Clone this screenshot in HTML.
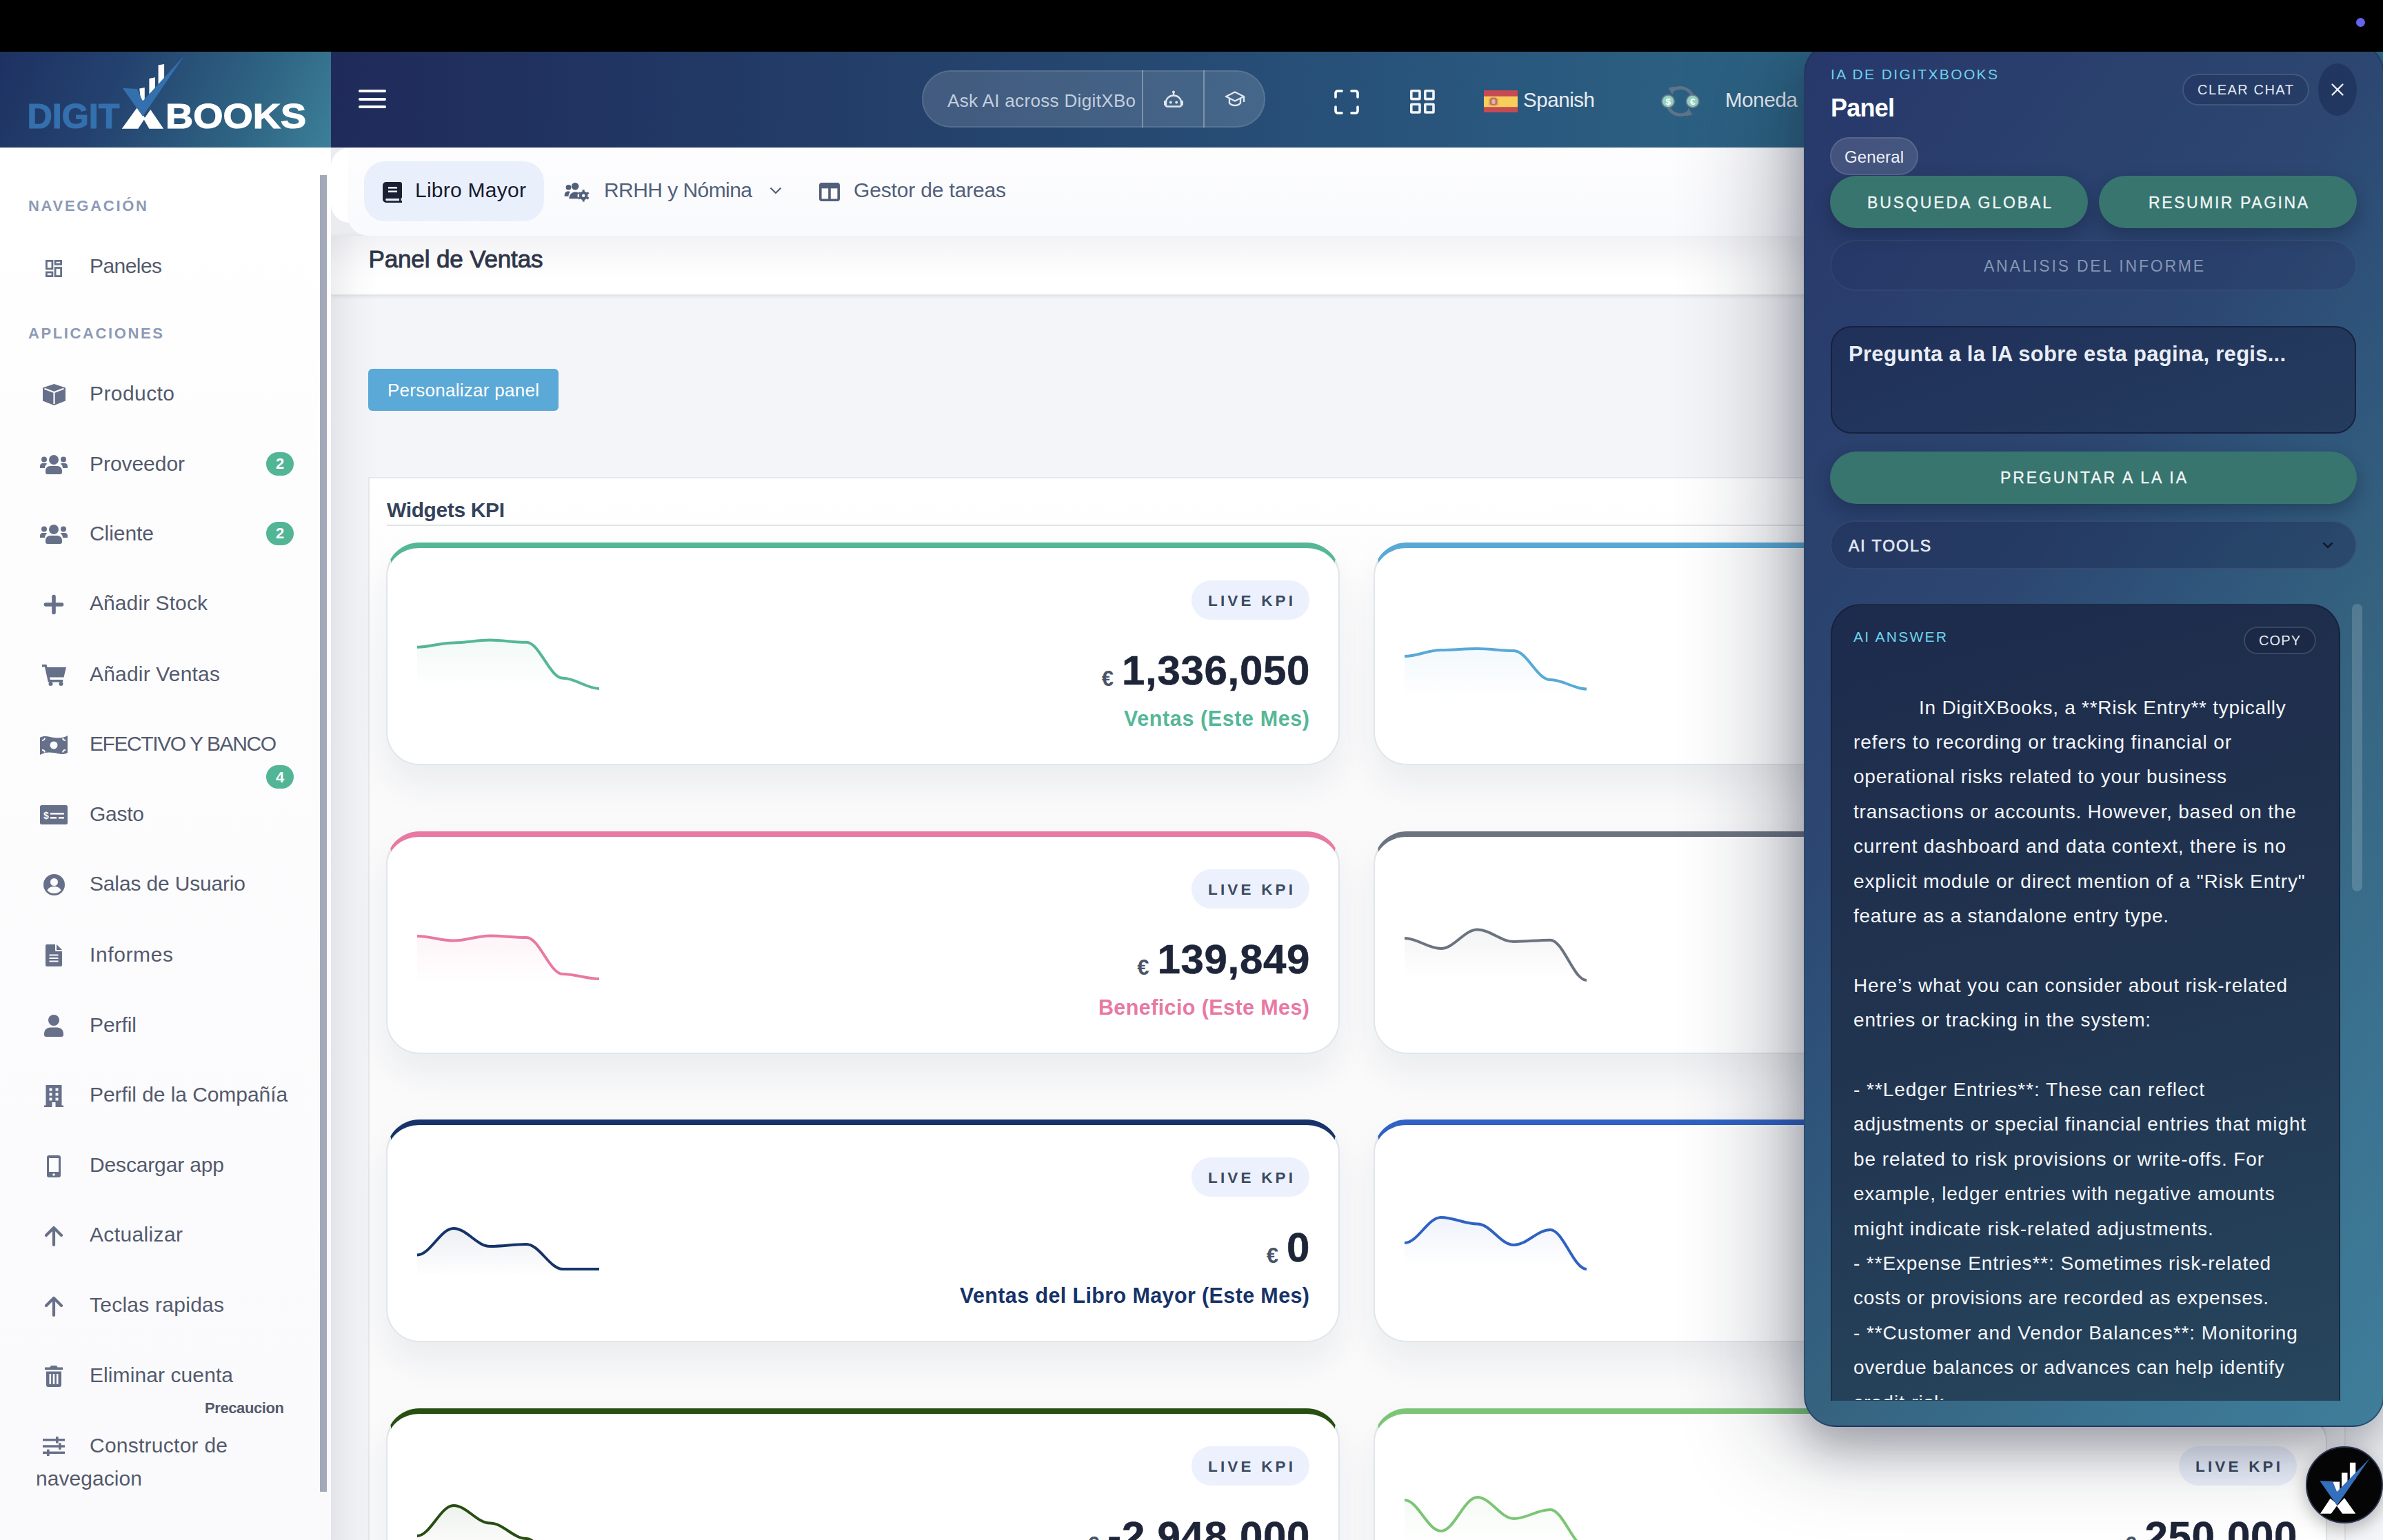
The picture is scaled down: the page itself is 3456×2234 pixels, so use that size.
<!DOCTYPE html><html lang="es"><head><meta charset="utf-8"><title>Panel de Ventas</title><style>
*{box-sizing:border-box;margin:0;padding:0}
html,body{width:3456px;height:2234px;overflow:hidden;background:#f4f5f8}
body{position:relative;font-family:"Liberation Sans",sans-serif;color:#333}
.abs{position:absolute}
svg{display:block;overflow:visible}
</style></head><body>
<div class="abs" style="left:480px;top:214px;width:2976px;height:128px;background:#ebecf0"></div>
<div class="abs" style="left:480px;top:342px;width:2976px;height:84.500px;background:linear-gradient(#f2f2f5,#fbfbfc 45%,#ffffff 75%);box-shadow:0 1px 0 #e9eaee,0 2px 6px rgba(30,40,70,.13)"></div>
<div class="abs" style="left:480px;top:214px;width:400px;height:109px;background:#ffffff;border-radius:27px 0 0 27px"></div>
<div class="abs" style="left:504px;top:214px;width:2952px;height:128px;background:linear-gradient(#fdfdfe,#f9fafd);border-bottom-left-radius:30px"></div>
<div class="abs" style="left:480px;top:342px;width:70px;height:1892px;background:linear-gradient(90deg,rgba(20,25,50,.075),rgba(20,25,50,.02) 55%,rgba(0,0,0,0))"></div>
<div class="abs" style="left:528px;top:234px;width:261px;height:87px;border-radius:30px;background:#eaeffc"></div>
<svg class="abs" style="left:555px;top:263.500px" width="28" height="30" viewBox="0 0 28 30"><path d="M5 0h20a3 3 0 0 1 3 3v19a2 2 0 0 1-1.5 1.9v3.1H28v3H5a5 5 0 0 1-5-5V5a5 5 0 0 1 5-5zm0 24a2 2 0 0 0 0 3.2h19V24z" fill="#1b2033"/><rect x="8" y="7" width="13" height="2.6" fill="#eaeffc"/><rect x="8" y="12.5" width="13" height="2.6" fill="#eaeffc"/></svg>
<div style="position:absolute;top:256.0px;line-height:39px;font-size:30px;color:#161b2e;font-weight:400;white-space:pre;left:602.0px;letter-spacing:0.26px;">Libro Mayor</div>
<svg class="abs" style="left:818px;top:265px" width="38" height="27" viewBox="0 0 38 28" fill="#525f7a"><circle cx="6" cy="7" r="4"/><circle cx="16" cy="5.5" r="5.5"/><path d="M0 19c0-4 2.5-6 6-6 1 0 2 .3 2.700 .7C7 15.500 6 18 6 20.500H0zM7 24c0-6 4-10 9-10 2 0 3.500.5 4.800 1.500-1.500 2-1.800 5.500.2 8.500z"/><circle cx="28.500" cy="19.500" r="6.500"/><circle cx="28.500" cy="19.500" r="2.300" fill="#fbfbfd"/><g stroke="#525f7a" stroke-width="3.200" stroke-linecap="butt"><path d="M28.500 10.500v18M20.700 15l15.600 9M20.700 24l15.600-9"/></g><circle cx="28.500" cy="19.500" r="2.300" fill="#fbfbfd"/></svg>
<div style="position:absolute;top:256.0px;line-height:39px;font-size:30px;color:#525f7a;font-weight:400;white-space:pre;left:876.0px;letter-spacing:-0.56px;">RRHH y Nómina</div>
<svg class="abs" style="left:1116px;top:271px" width="18" height="11" viewBox="0 0 18 11"><path d="M1.500 1.500l7.500 7.500 7.500-7.500" fill="none" stroke="#525f7a" stroke-width="2.200"/></svg>
<svg class="abs" style="left:1188px;top:265px" width="30" height="27" viewBox="0 0 30 27"><rect x="1.800" y="1.800" width="26.400" height="23.400" rx="2" fill="none" stroke="#525f7a" stroke-width="3.600"/><rect x="1.800" y="1.800" width="26.400" height="6.500" fill="#525f7a"/><rect x="13.200" y="5" width="3.600" height="20" fill="#525f7a"/></svg>
<div style="position:absolute;top:256.0px;line-height:39px;font-size:30px;color:#525f7a;font-weight:400;white-space:pre;left:1238.0px;letter-spacing:-0.16px;">Gestor de tareas</div>
<div style="position:absolute;top:352.5px;line-height:46px;font-size:35px;color:#2f3648;font-weight:400;white-space:pre;left:534.5px;letter-spacing:-0.14px;-webkit-text-stroke:0.900px #2f3648;">Panel de Ventas</div>
<div class="abs" style="left:534px;top:535px;width:276px;height:61px;border-radius:6px;background:#5ba9d7"></div>
<div style="position:absolute;top:549.0px;line-height:34px;font-size:26px;color:#ffffff;font-weight:400;white-space:pre;left:562.0px;letter-spacing:0.27px;">Personalizar panel</div>
<div class="abs" style="left:534px;top:692px;width:2868px;height:1700px;background:linear-gradient(#ffffff,#fafafb 300px);border:2px solid #e4e7eb"></div>
<div style="position:absolute;top:719.5px;line-height:39px;font-size:30px;color:#34435a;font-weight:700;white-space:pre;left:561.0px;letter-spacing:-0.37px;">Widgets KPI</div>
<div class="abs" style="left:561px;top:761px;width:2815px;height:2px;background:#dfe4e8"></div>
<div class="abs" style="left:560px;top:787px;width:1383px;height:323px;border-radius:48px;background:#fff;border:2px solid #e1e6ea;border-top:8px solid #55b797;box-shadow:0 28px 50px rgba(30,40,60,.065)"></div>
<svg class="abs" style="left:0;top:0" width="3456" height="2234" viewBox="0 0 3456 2234"><defs><linearGradient id="g0" x1="0" y1="929" x2="0" y2="999" gradientUnits="userSpaceOnUse"><stop offset="0" stop-color="#55b797" stop-opacity=".08"/><stop offset="1" stop-color="#55b797" stop-opacity="0"/></linearGradient></defs><path d="M605.0 938.7C624.0 938.7 638.8 932.4 657.8 932.4C676.8 932.4 691.6 928.6 710.6 928.6C729.6 928.6 744.4 931.7 763.4 931.7C782.4 931.7 797.2 983.7 816.2 983.7C835.2 983.7 850.0 998.9 869.0 998.9L869.0 1058.9L605.0 1058.9Z" fill="url(#g0)"/><path d="M605.0 938.7C624.0 938.7 638.8 932.4 657.8 932.4C676.8 932.4 691.6 928.6 710.6 928.6C729.6 928.6 744.4 931.7 763.4 931.7C782.4 931.7 797.2 983.7 816.2 983.7C835.2 983.7 850.0 998.9 869.0 998.9" fill="none" stroke="#55b797" stroke-width="4" stroke-linecap="butt" stroke-linejoin="round"/></svg>
<div class="abs" style="left:1728px;top:842px;width:171px;height:57px;border-radius:29px;background:#ecf1fd"></div>
<div style="position:absolute;top:856.5px;line-height:29px;font-size:22.5px;color:#3b4a60;font-weight:700;white-space:pre;left:1752.0px;letter-spacing:4.18px;">LIVE KPI</div>
<div style="position:absolute;top:938.0px;line-height:70px;font-size:60px;color:#1e2538;font-weight:700;white-space:pre;right:1556.5px;margin-right:-0.70px;letter-spacing:0.70px;-webkit-text-stroke:0.600px #1e2538;">1,336,050</div>
<div style="position:absolute;top:969.5px;line-height:30px;font-size:31px;color:#4a5568;font-weight:700;white-space:pre;right:1841.0px;">€</div>
<div style="position:absolute;top:1022.0px;line-height:40px;font-size:30.5px;color:#55b797;font-weight:700;white-space:pre;right:1557.0px;margin-right:-0.60px;letter-spacing:0.60px;">Ventas (Este Mes)</div>
<div class="abs" style="left:1992px;top:787px;width:1383px;height:323px;border-radius:48px;background:#fff;border:2px solid #e1e6ea;border-top:8px solid #58a9d6;box-shadow:0 28px 50px rgba(30,40,60,.065)"></div>
<svg class="abs" style="left:0;top:0" width="3456" height="2234" viewBox="0 0 3456 2234"><defs><linearGradient id="g1" x1="0" y1="941" x2="0" y2="1011" gradientUnits="userSpaceOnUse"><stop offset="0" stop-color="#58a9d6" stop-opacity=".08"/><stop offset="1" stop-color="#58a9d6" stop-opacity="0"/></linearGradient></defs><path d="M2037.0 952.0C2056.0 952.0 2070.8 943.0 2089.8 943.0C2108.8 943.0 2123.6 941.0 2142.6 941.0C2161.6 941.0 2176.4 944.0 2195.4 944.0C2214.4 944.0 2229.2 986.0 2248.2 986.0C2267.2 986.0 2282.0 999.5 2301.0 999.5L2301.0 1059.5L2037.0 1059.5Z" fill="url(#g1)"/><path d="M2037.0 952.0C2056.0 952.0 2070.8 943.0 2089.8 943.0C2108.8 943.0 2123.6 941.0 2142.6 941.0C2161.6 941.0 2176.4 944.0 2195.4 944.0C2214.4 944.0 2229.2 986.0 2248.2 986.0C2267.2 986.0 2282.0 999.5 2301.0 999.5" fill="none" stroke="#58a9d6" stroke-width="4" stroke-linecap="butt" stroke-linejoin="round"/></svg>
<div class="abs" style="left:3160px;top:842px;width:171px;height:57px;border-radius:29px;background:#ecf1fd"></div>
<div style="position:absolute;top:856.5px;line-height:29px;font-size:22.5px;color:#3b4a60;font-weight:700;white-space:pre;left:3184.0px;letter-spacing:4.18px;">LIVE KPI</div>
<div class="abs" style="left:560px;top:1206px;width:1383px;height:323px;border-radius:48px;background:#fff;border:2px solid #e1e6ea;border-top:8px solid #e879a3;box-shadow:0 28px 50px rgba(30,40,60,.065)"></div>
<svg class="abs" style="left:0;top:0" width="3456" height="2234" viewBox="0 0 3456 2234"><defs><linearGradient id="g2" x1="0" y1="1358" x2="0" y2="1428" gradientUnits="userSpaceOnUse"><stop offset="0" stop-color="#e879a3" stop-opacity=".08"/><stop offset="1" stop-color="#e879a3" stop-opacity="0"/></linearGradient></defs><path d="M605.0 1358.0C624.0 1358.0 638.8 1364.6 657.8 1364.6C676.8 1364.6 691.6 1357.5 710.6 1357.5C729.6 1357.5 744.4 1360.0 763.4 1360.0C782.4 1360.0 797.2 1413.0 816.2 1413.0C835.2 1413.0 850.0 1420.0 869.0 1420.0L869.0 1480.0L605.0 1480.0Z" fill="url(#g2)"/><path d="M605.0 1358.0C624.0 1358.0 638.8 1364.6 657.8 1364.6C676.8 1364.6 691.6 1357.5 710.6 1357.5C729.6 1357.5 744.4 1360.0 763.4 1360.0C782.4 1360.0 797.2 1413.0 816.2 1413.0C835.2 1413.0 850.0 1420.0 869.0 1420.0" fill="none" stroke="#e879a3" stroke-width="4" stroke-linecap="butt" stroke-linejoin="round"/></svg>
<div class="abs" style="left:1728px;top:1261px;width:171px;height:57px;border-radius:29px;background:#ecf1fd"></div>
<div style="position:absolute;top:1275.5px;line-height:29px;font-size:22.5px;color:#3b4a60;font-weight:700;white-space:pre;left:1752.0px;letter-spacing:4.18px;">LIVE KPI</div>
<div style="position:absolute;top:1357.0px;line-height:70px;font-size:60px;color:#1e2538;font-weight:700;white-space:pre;right:1556.5px;margin-right:-0.70px;letter-spacing:0.70px;-webkit-text-stroke:0.600px #1e2538;">139,849</div>
<div style="position:absolute;top:1388.5px;line-height:30px;font-size:31px;color:#4a5568;font-weight:700;white-space:pre;right:1789.6px;">€</div>
<div style="position:absolute;top:1441.0px;line-height:40px;font-size:30.5px;color:#e879a3;font-weight:700;white-space:pre;right:1557.0px;margin-right:-0.41px;letter-spacing:0.41px;">Beneficio (Este Mes)</div>
<div class="abs" style="left:1992px;top:1206px;width:1383px;height:323px;border-radius:48px;background:#fff;border:2px solid #e1e6ea;border-top:8px solid #6c7380;box-shadow:0 28px 50px rgba(30,40,60,.065)"></div>
<svg class="abs" style="left:0;top:0" width="3456" height="2234" viewBox="0 0 3456 2234"><defs><linearGradient id="g3" x1="0" y1="1349" x2="0" y2="1419" gradientUnits="userSpaceOnUse"><stop offset="0" stop-color="#6c7380" stop-opacity=".08"/><stop offset="1" stop-color="#6c7380" stop-opacity="0"/></linearGradient></defs><path d="M2037.0 1361.0C2056.0 1361.0 2070.8 1376.0 2089.8 1376.0C2108.8 1376.0 2123.6 1348.6 2142.6 1348.6C2161.6 1348.6 2176.4 1366.0 2195.4 1366.0C2214.4 1366.0 2229.2 1363.7 2248.2 1363.7C2267.2 1363.7 2282.0 1422.0 2301.0 1422.0L2301.0 1482.0L2037.0 1482.0Z" fill="url(#g3)"/><path d="M2037.0 1361.0C2056.0 1361.0 2070.8 1376.0 2089.8 1376.0C2108.8 1376.0 2123.6 1348.6 2142.6 1348.6C2161.6 1348.6 2176.4 1366.0 2195.4 1366.0C2214.4 1366.0 2229.2 1363.7 2248.2 1363.7C2267.2 1363.7 2282.0 1422.0 2301.0 1422.0" fill="none" stroke="#6c7380" stroke-width="4" stroke-linecap="butt" stroke-linejoin="round"/></svg>
<div class="abs" style="left:3160px;top:1261px;width:171px;height:57px;border-radius:29px;background:#ecf1fd"></div>
<div style="position:absolute;top:1275.5px;line-height:29px;font-size:22.5px;color:#3b4a60;font-weight:700;white-space:pre;left:3184.0px;letter-spacing:4.18px;">LIVE KPI</div>
<div class="abs" style="left:560px;top:1624px;width:1383px;height:323px;border-radius:48px;background:#fff;border:2px solid #e1e6ea;border-top:8px solid #16336a;box-shadow:0 28px 50px rgba(30,40,60,.065)"></div>
<svg class="abs" style="left:0;top:0" width="3456" height="2234" viewBox="0 0 3456 2234"><defs><linearGradient id="g4" x1="0" y1="1782" x2="0" y2="1852" gradientUnits="userSpaceOnUse"><stop offset="0" stop-color="#16336a" stop-opacity=".08"/><stop offset="1" stop-color="#16336a" stop-opacity="0"/></linearGradient></defs><path d="M605.0 1820.5C624.0 1820.5 638.8 1782.0 657.8 1782.0C676.8 1782.0 691.6 1808.0 710.6 1808.0C729.6 1808.0 744.4 1805.0 763.4 1805.0C782.4 1805.0 797.2 1841.0 816.2 1841.0C835.2 1841.0 850.0 1841.0 869.0 1841.0L869.0 1901.0L605.0 1901.0Z" fill="url(#g4)"/><path d="M605.0 1820.5C624.0 1820.5 638.8 1782.0 657.8 1782.0C676.8 1782.0 691.6 1808.0 710.6 1808.0C729.6 1808.0 744.4 1805.0 763.4 1805.0C782.4 1805.0 797.2 1841.0 816.2 1841.0C835.2 1841.0 850.0 1841.0 869.0 1841.0" fill="none" stroke="#16336a" stroke-width="4" stroke-linecap="butt" stroke-linejoin="round"/></svg>
<div class="abs" style="left:1728px;top:1679px;width:171px;height:57px;border-radius:29px;background:#ecf1fd"></div>
<div style="position:absolute;top:1693.5px;line-height:29px;font-size:22.5px;color:#3b4a60;font-weight:700;white-space:pre;left:1752.0px;letter-spacing:4.18px;">LIVE KPI</div>
<div style="position:absolute;top:1775.0px;line-height:70px;font-size:60px;color:#1e2538;font-weight:700;white-space:pre;right:1556.5px;margin-right:-0.70px;letter-spacing:0.70px;-webkit-text-stroke:0.600px #1e2538;">0</div>
<div style="position:absolute;top:1806.5px;line-height:30px;font-size:31px;color:#4a5568;font-weight:700;white-space:pre;right:1601.9px;">€</div>
<div style="position:absolute;top:1859.0px;line-height:40px;font-size:30.5px;color:#16336a;font-weight:700;white-space:pre;right:1557.0px;margin-right:-0.38px;letter-spacing:0.38px;">Ventas del Libro Mayor (Este Mes)</div>
<div class="abs" style="left:1992px;top:1624px;width:1383px;height:323px;border-radius:48px;background:#fff;border:2px solid #e1e6ea;border-top:8px solid #2f62c4;box-shadow:0 28px 50px rgba(30,40,60,.065)"></div>
<svg class="abs" style="left:0;top:0" width="3456" height="2234" viewBox="0 0 3456 2234"><defs><linearGradient id="g5" x1="0" y1="1766" x2="0" y2="1836" gradientUnits="userSpaceOnUse"><stop offset="0" stop-color="#2f62c4" stop-opacity=".08"/><stop offset="1" stop-color="#2f62c4" stop-opacity="0"/></linearGradient></defs><path d="M2037.0 1803.0C2056.0 1803.0 2070.8 1766.0 2089.8 1766.0C2108.8 1766.0 2123.6 1775.5 2142.6 1775.5C2161.6 1775.5 2176.4 1806.0 2195.4 1806.0C2214.4 1806.0 2229.2 1784.0 2248.2 1784.0C2267.2 1784.0 2282.0 1841.0 2301.0 1841.0L2301.0 1901.0L2037.0 1901.0Z" fill="url(#g5)"/><path d="M2037.0 1803.0C2056.0 1803.0 2070.8 1766.0 2089.8 1766.0C2108.8 1766.0 2123.6 1775.5 2142.6 1775.5C2161.6 1775.5 2176.4 1806.0 2195.4 1806.0C2214.4 1806.0 2229.2 1784.0 2248.2 1784.0C2267.2 1784.0 2282.0 1841.0 2301.0 1841.0" fill="none" stroke="#2f62c4" stroke-width="4" stroke-linecap="butt" stroke-linejoin="round"/></svg>
<div class="abs" style="left:3160px;top:1679px;width:171px;height:57px;border-radius:29px;background:#ecf1fd"></div>
<div style="position:absolute;top:1693.5px;line-height:29px;font-size:22.5px;color:#3b4a60;font-weight:700;white-space:pre;left:3184.0px;letter-spacing:4.18px;">LIVE KPI</div>
<div class="abs" style="left:560px;top:2043px;width:1383px;height:323px;border-radius:48px;background:#fff;border:2px solid #e1e6ea;border-top:8px solid #284f12;box-shadow:0 28px 50px rgba(30,40,60,.065)"></div>
<svg class="abs" style="left:0;top:0" width="3456" height="2234" viewBox="0 0 3456 2234"><defs><linearGradient id="g6" x1="0" y1="2184" x2="0" y2="2254" gradientUnits="userSpaceOnUse"><stop offset="0" stop-color="#284f12" stop-opacity=".08"/><stop offset="1" stop-color="#284f12" stop-opacity="0"/></linearGradient></defs><path d="M605.0 2228.0C624.0 2228.0 638.8 2184.0 657.8 2184.0C676.8 2184.0 691.6 2209.5 710.6 2209.5C729.6 2209.5 744.4 2232.0 763.4 2232.0C782.4 2232.0 797.2 2280.0 816.2 2280.0C835.2 2280.0 850.0 2290.0 869.0 2290.0L869.0 2350.0L605.0 2350.0Z" fill="url(#g6)"/><path d="M605.0 2228.0C624.0 2228.0 638.8 2184.0 657.8 2184.0C676.8 2184.0 691.6 2209.5 710.6 2209.5C729.6 2209.5 744.4 2232.0 763.4 2232.0C782.4 2232.0 797.2 2280.0 816.2 2280.0C835.2 2280.0 850.0 2290.0 869.0 2290.0" fill="none" stroke="#284f12" stroke-width="4" stroke-linecap="butt" stroke-linejoin="round"/></svg>
<div class="abs" style="left:1728px;top:2098px;width:171px;height:57px;border-radius:29px;background:#ecf1fd"></div>
<div style="position:absolute;top:2112.5px;line-height:29px;font-size:22.5px;color:#3b4a60;font-weight:700;white-space:pre;left:1752.0px;letter-spacing:4.18px;">LIVE KPI</div>
<div style="position:absolute;top:2194.0px;line-height:70px;font-size:60px;color:#1e2538;font-weight:700;white-space:pre;right:1556.5px;margin-right:-0.70px;letter-spacing:0.70px;-webkit-text-stroke:0.600px #1e2538;">-2,948,000</div>
<div style="position:absolute;top:2225.5px;line-height:30px;font-size:31px;color:#4a5568;font-weight:700;white-space:pre;right:1861.7px;">€</div>
<div class="abs" style="left:1992px;top:2043px;width:1383px;height:323px;border-radius:48px;background:#fff;border:2px solid #e1e6ea;border-top:8px solid #7cc576;box-shadow:0 28px 50px rgba(30,40,60,.065)"></div>
<svg class="abs" style="left:0;top:0" width="3456" height="2234" viewBox="0 0 3456 2234"><defs><linearGradient id="g7" x1="0" y1="2172" x2="0" y2="2242" gradientUnits="userSpaceOnUse"><stop offset="0" stop-color="#7cc576" stop-opacity=".08"/><stop offset="1" stop-color="#7cc576" stop-opacity="0"/></linearGradient></defs><path d="M2037.0 2176.0C2056.0 2176.0 2070.8 2221.0 2089.8 2221.0C2108.8 2221.0 2123.6 2172.0 2142.6 2172.0C2161.6 2172.0 2176.4 2203.0 2195.4 2203.0C2214.4 2203.0 2229.2 2190.0 2248.2 2190.0C2267.2 2190.0 2282.0 2245.0 2301.0 2245.0L2301.0 2305.0L2037.0 2305.0Z" fill="url(#g7)"/><path d="M2037.0 2176.0C2056.0 2176.0 2070.8 2221.0 2089.8 2221.0C2108.8 2221.0 2123.6 2172.0 2142.6 2172.0C2161.6 2172.0 2176.4 2203.0 2195.4 2203.0C2214.4 2203.0 2229.2 2190.0 2248.2 2190.0C2267.2 2190.0 2282.0 2245.0 2301.0 2245.0" fill="none" stroke="#7cc576" stroke-width="4" stroke-linecap="butt" stroke-linejoin="round"/></svg>
<div class="abs" style="left:3160px;top:2098px;width:171px;height:57px;border-radius:29px;background:#ecf1fd"></div>
<div style="position:absolute;top:2112.5px;line-height:29px;font-size:22.5px;color:#3b4a60;font-weight:700;white-space:pre;left:3184.0px;letter-spacing:4.18px;">LIVE KPI</div>
<div style="position:absolute;top:2194.0px;line-height:70px;font-size:60px;color:#1e2538;font-weight:700;white-space:pre;right:124.5px;margin-right:-0.70px;letter-spacing:0.70px;-webkit-text-stroke:0.600px #1e2538;">250,000</div>
<div style="position:absolute;top:2225.5px;line-height:30px;font-size:31px;color:#4a5568;font-weight:700;white-space:pre;right:357.6px;">€</div>
<div class="abs" style="left:0;top:0;width:3456px;height:75px;background:#000;z-index:5"></div>
<div class="abs" style="left:3417px;top:25.500px;width:13px;height:13px;border-radius:50%;background:#6663ef;z-index:6"></div>
<div class="abs" style="left:480px;top:75px;width:2976px;height:139px;background:linear-gradient(92deg,#1f2a5a 0%,#213563 14%,#25466f 36%,#28537b 52%,#2d6585 72%,#2f6a88 100%)"></div>
<div class="abs" style="left:0;top:75px;width:480px;height:139px;background:linear-gradient(115deg,#1e3262 0%,#24426f 35%,#2f6584 75%,#3c7f98 100%)"></div>
<div class="abs" style="left:520px;top:130.0px;width:40px;height:4px;border-radius:2px;background:#fff"></div>
<div class="abs" style="left:520px;top:141.5px;width:40px;height:4px;border-radius:2px;background:#fff"></div>
<div class="abs" style="left:520px;top:153.0px;width:40px;height:4px;border-radius:2px;background:#fff"></div>
<svg class="abs" style="left:0;top:75px" width="480" height="139" viewBox="0 0 480 139">
<text x="39.500" y="111.400" font-family="Liberation Sans, sans-serif" font-weight="700" font-size="50" fill="#3470ae" stroke="#3470ae" stroke-width="1.200" textLength="134" lengthAdjust="spacingAndGlyphs">DIGIT</text>
<text x="240" y="111.400" font-family="Liberation Sans, sans-serif" font-weight="700" font-size="50" fill="#ffffff" stroke="#ffffff" stroke-width="1.200" textLength="204" lengthAdjust="spacingAndGlyphs">BOOKS</text>
<path d="M176.7 111.7L200.3 111.7L210.4 96.3L199.4 80.2zM216.4 111.7L237.2 111.7L218.3 84.0L208.5 98.1z" fill="#fff"/>
<path d="M202.2 53.4L209.8 51.9L209.8 70.8L204.1 70.8zM216.4 39.0L224.9 37.3L224.9 59.4L216.4 63.2zM229.6 19.4L238.1 17.9L238.1 44.3L229.6 51.9z" fill="#fff"/>
<path d="M177.7 52.8L199.0 54.1L207.0 71.7L267.4 5.6L207.0 93.8z" fill="#3470ae"/>
</svg>
<div class="abs" style="left:1337px;top:102px;width:498px;height:83px;border-radius:42px;background:rgba(255,255,255,.14);border:2px solid rgba(255,255,255,.10)"></div>
<div class="abs" style="left:1656px;top:102px;width:2px;height:83px;background:rgba(255,255,255,.30)"></div>
<div class="abs" style="left:1745px;top:102px;width:2px;height:83px;background:rgba(255,255,255,.30)"></div>
<div style="position:absolute;top:129.0px;line-height:34px;font-size:26px;color:#c3cede;font-weight:400;white-space:pre;left:1374.0px;letter-spacing:0.34px;">Ask AI across DigitXBo</div>
<svg class="abs" style="left:1688px;top:131px" width="28" height="25" viewBox="0 0 28 25" fill="none" stroke="#dfe6f0" stroke-width="2.300"><path d="M14 3.500v4"/><circle cx="14" cy="2.400" r="2" fill="#dfe6f0" stroke="none"/><path d="M4.500 23.500h19a1.500 1.500 0 0 0 1.500-1.500v-4.500a11 10 0 0 0-22 0V22a1.500 1.500 0 0 0 1.500 1.500z" stroke-linejoin="round"/><path d="M1.200 16v5M26.800 16v5" stroke-width="2.400" stroke-linecap="round"/><circle cx="9.800" cy="17.500" r="1.900" fill="#dfe6f0" stroke="none"/><circle cx="18.200" cy="17.500" r="1.900" fill="#dfe6f0" stroke="none"/></svg>
<svg class="abs" style="left:1776px;top:132px" width="30" height="24" viewBox="0 0 30 24" fill="none" stroke="#dfe6f0" stroke-width="2.400" stroke-linejoin="round"><path d="M15 1.500L2 8l13 6.500L28 8z"/><path d="M7 11v6.500c2 2.500 5 3.500 8 3.500s6-1 8-3.500V11"/><path d="M28 8v8"/></svg>
<svg class="abs" style="left:1935px;top:130px" width="36" height="36" viewBox="0 0 36 36" fill="none" stroke="#fff" stroke-width="3.600" stroke-linecap="round" stroke-linejoin="round"><path d="M2 11V5a3 3 0 0 1 3-3h6M25 2h6a3 3 0 0 1 3 3v6M34 25v6a3 3 0 0 1-3 3h-6M11 34H5a3 3 0 0 1-3-3v-6"/></svg>
<svg class="abs" style="left:2045px;top:130px" width="36" height="35" viewBox="0 0 36 35" fill="none" stroke="#f1f3f7" stroke-width="3.600" stroke-linejoin="round"><rect x="1.800" y="1.800" width="12.200" height="11.800" rx=".6"/><rect x="21.800" y="1.800" width="12.200" height="11.800" rx=".6"/><rect x="1.800" y="21.200" width="12.200" height="11.800" rx=".6"/><rect x="21.800" y="21.200" width="12.200" height="11.800" rx=".6"/></svg>
<svg class="abs" style="left:2152px;top:131px" width="49" height="32" viewBox="0 0 49 32"><rect width="49" height="32" fill="#c54a52"/><rect y="8.800" width="49" height="15.400" fill="#f7cd5c"/><rect x="9" y="10.500" width="10" height="11.500" rx="3" fill="#c9705a"/><rect x="11.500" y="13" width="5" height="7" rx="2" fill="#d9b7b0"/><rect x="7" y="12" width="1.800" height="10" fill="#c9a45a"/><rect x="19.200" y="12" width="1.800" height="10" fill="#c9a45a"/></svg>
<div style="position:absolute;top:126.0px;line-height:38px;font-size:29.5px;color:#e9edf3;font-weight:400;white-space:pre;left:2209.0px;letter-spacing:-0.43px;">Spanish</div>
<svg class="abs" style="left:2406px;top:118px" width="62" height="58" viewBox="-31 -29 62 58">
<g fill="none" stroke="#5f7489" stroke-width="4.600"><path d="M17.500 -8.500A19.500 19.500 0 0 0 -12 -15.500"/><path d="M-17.500 8.500A19.500 19.500 0 0 0 12 15.500"/></g>
<path d="M-17.500 -19.500L-8 -21.500 -11.500 -9.500z" fill="#5f7489"/><path d="M17.500 19.500L8 21.500 11.500 9.500z" fill="#5f7489"/>
<circle cx="-17.800" cy="0" r="10" fill="#6c7d90"/><circle cx="17.800" cy="0" r="10" fill="#6c7d90"/>
<circle cx="-17.800" cy="0" r="8.200" fill="#93d2c0"/><circle cx="17.800" cy="0" r="8.200" fill="#93d2c0"/>
<text x="-17.800" y="4.800" font-size="13.500" font-weight="700" fill="#fff" text-anchor="middle" font-family="Liberation Sans, sans-serif">$</text><text x="17.800" y="4.800" font-size="13.500" font-weight="700" fill="#fff" text-anchor="middle" font-family="Liberation Sans, sans-serif">€</text></svg>
<div style="position:absolute;top:126.0px;line-height:38px;font-size:29.5px;color:#e9edf3;font-weight:400;white-space:pre;left:2502.0px;letter-spacing:-0.32px;">Moneda</div>
<div class="abs" style="left:0;top:214px;width:480px;height:2020px;background:linear-gradient(180deg,#ffffff 0%,#fdfdfe 25%,#fafafc 100%)"></div>
<div class="abs" style="left:464px;top:254px;width:10px;height:1910px;background:#a2a9b8"></div>
<div style="position:absolute;top:283.5px;line-height:29px;font-size:22px;color:#8d9ab6;font-weight:700;white-space:pre;left:41.0px;letter-spacing:2.72px;">NAVEGACIÓN</div>
<div style="position:absolute;top:468.5px;line-height:29px;font-size:22px;color:#8d9ab6;font-weight:700;white-space:pre;left:41.0px;letter-spacing:2.61px;">APLICACIONES</div>
<svg class="abs" style="left:66.0px;top:377.0px" width="24" height="25" viewBox="0 0 24 25"><g fill="none" stroke="#667089" stroke-width="2.800"><rect x="1.400" y="1.400" width="8.500" height="11.500"/><rect x="14.100" y="1.400" width="8.500" height="5"/><rect x="1.400" y="18" width="8.500" height="5.600"/><rect x="14.100" y="11.500" width="8.500" height="12.100"/></g></svg>
<div style="position:absolute;top:366.0px;line-height:39px;font-size:30px;color:#545a6d;font-weight:400;white-space:pre;left:130.0px;letter-spacing:-0.57px;">Paneles</div>
<svg class="abs" style="left:61.5px;top:557.0px" width="33" height="31" viewBox="0 0 33 31"><path d="M16.500 0L33 5.500v19L16.500 31 0 24.500v-19z" fill="#667089"/><path d="M2.500 6.800l14 5.200 14-5.200M16.500 12v17" fill="none" stroke="#fcfcfe" stroke-width="2.200"/></svg>
<div style="position:absolute;top:551.0px;line-height:39px;font-size:30px;color:#545a6d;font-weight:400;white-space:pre;left:130.0px;letter-spacing:0.42px;">Producto</div>
<svg class="abs" style="left:58.0px;top:660.0px" width="40" height="28" viewBox="0 0 40 28"><g fill="#667089"><circle cx="6" cy="6.500" r="4"/><circle cx="34" cy="6.500" r="4"/><circle cx="20" cy="7" r="7"/><path d="M0 19v-3c0-2.500 2-4 4-4h4c1 0 1.800.3 2.500.8C8 14.500 7 16.500 7 19zM40 19v-3c0-2.500-2-4-4-4h-4c-1 0-1.800.3-2.500.8C32 14.500 33 16.500 33 19zM8 25v-2c0-4 3-7 7-7h10c4 0 7 3 7 7v2a3 3 0 0 1-3 3H11a3 3 0 0 1-3-3z"/></g></svg>
<div style="position:absolute;top:652.5px;line-height:39px;font-size:30px;color:#545a6d;font-weight:400;white-space:pre;left:130.0px;letter-spacing:-0.05px;">Proveedor</div>
<svg class="abs" style="left:58.0px;top:761.0px" width="40" height="28" viewBox="0 0 40 28"><g fill="#667089"><circle cx="6" cy="6.500" r="4"/><circle cx="34" cy="6.500" r="4"/><circle cx="20" cy="7" r="7"/><path d="M0 19v-3c0-2.500 2-4 4-4h4c1 0 1.800.3 2.500.8C8 14.500 7 16.500 7 19zM40 19v-3c0-2.500-2-4-4-4h-4c-1 0-1.800.3-2.500.8C32 14.500 33 16.500 33 19zM8 25v-2c0-4 3-7 7-7h10c4 0 7 3 7 7v2a3 3 0 0 1-3 3H11a3 3 0 0 1-3-3z"/></g></svg>
<div style="position:absolute;top:753.5px;line-height:39px;font-size:30px;color:#545a6d;font-weight:400;white-space:pre;left:130.0px;letter-spacing:-0.06px;">Cliente</div>
<svg class="abs" style="left:64.0px;top:862.5px" width="28" height="28" viewBox="0 0 28 28"><path d="M14 2.500v23M2.500 14h23" stroke="#667089" stroke-width="5.600" stroke-linecap="round" fill="none"/></svg>
<div style="position:absolute;top:855.0px;line-height:39px;font-size:30px;color:#545a6d;font-weight:400;white-space:pre;left:130.0px;letter-spacing:0.08px;">Añadir Stock</div>
<svg class="abs" style="left:60.5px;top:963.5px" width="35" height="31" viewBox="0 0 35 31"><g fill="#667089"><path d="M0 0h6.500l1 4H35l-3.500 14.500H11l.7 3.500h18.500v3.500H8.800L4 3.500H0z"/><circle cx="12.500" cy="28" r="3"/><circle cx="27.500" cy="28" r="3"/></g></svg>
<div style="position:absolute;top:957.5px;line-height:39px;font-size:30px;color:#545a6d;font-weight:400;white-space:pre;left:130.0px;letter-spacing:0.18px;">Añadir Ventas</div>
<svg class="abs" style="left:58.0px;top:1066.5px" width="40" height="28" viewBox="0 0 40 28"><path d="M0 3c7-4 13-1 20 0s13 1 20-3v25c-7 4-13 1-20 0S7 24 0 28z" fill="#667089"/><circle cx="20" cy="14" r="5.500" fill="#fcfcfe"/><path d="M3 7a4 4 0 0 0 4-3.500M3 21a4 4 0 0 1 4 3.500M37 7a4 4 0 0 1-4-3M37 21a4 4 0 0 0-4 3.500" stroke="#fcfcfe" stroke-width="2" fill="none"/></svg>
<div style="position:absolute;top:1059.0px;line-height:39px;font-size:30px;color:#545a6d;font-weight:400;white-space:pre;left:130.0px;letter-spacing:-1.42px;">EFECTIVO Y BANCO</div>
<svg class="abs" style="left:58.0px;top:1168.0px" width="40" height="28" viewBox="0 0 40 28"><rect width="40" height="28" rx="2.500" fill="#667089"/><rect x="15" y="11" width="20" height="2.600" fill="#fcfcfe"/><rect x="15" y="17" width="9" height="2.600" fill="#fcfcfe"/><rect x="27" y="17" width="8" height="2.600" fill="#fcfcfe"/><text x="9" y="20" font-size="14" font-weight="700" fill="#fcfcfe" text-anchor="middle" font-family="Liberation Sans,sans-serif">$</text></svg>
<div style="position:absolute;top:1160.5px;line-height:39px;font-size:30px;color:#545a6d;font-weight:400;white-space:pre;left:130.0px;letter-spacing:-0.26px;">Gasto</div>
<svg class="abs" style="left:62.5px;top:1268.0px" width="31" height="31" viewBox="0 0 31 31"><circle cx="15.500" cy="15.500" r="15.500" fill="#667089"/><circle cx="15.500" cy="11.500" r="5.500" fill="#fcfcfe"/><path d="M5.500 23.500c2-4 5.500-5.500 10-5.500s8 1.500 10 5.500c-2.500 3-6 4.500-10 4.500s-7.500-1.500-10-4.500z" fill="#fcfcfe"/></svg>
<div style="position:absolute;top:1262.0px;line-height:39px;font-size:30px;color:#545a6d;font-weight:400;white-space:pre;left:130.0px;letter-spacing:-0.16px;">Salas de Usuario</div>
<svg class="abs" style="left:66.0px;top:1370.0px" width="24" height="32" viewBox="0 0 24 32"><path d="M0 2a2 2 0 0 1 2-2h12v8.500a1.500 1.500 0 0 0 1.500 1.500H24v20a2 2 0 0 1-2 2H2a2 2 0 0 1-2-2zM16 0l8 8h-8z" fill="#667089"/><g fill="#fcfcfe"><rect x="5.500" y="14.500" width="13" height="2"/><rect x="5.500" y="19" width="13" height="2"/><rect x="5.500" y="23.500" width="13" height="2"/></g></svg>
<div style="position:absolute;top:1364.5px;line-height:39px;font-size:30px;color:#545a6d;font-weight:400;white-space:pre;left:130.0px;letter-spacing:0.61px;">Informes</div>
<svg class="abs" style="left:64.0px;top:1472.0px" width="28" height="32" viewBox="0 0 28 32"><circle cx="14" cy="8" r="8" fill="#667089"/><path d="M0 28c0-6 4-9.500 9-9.500h10c5 0 9 3.500 9 9.500v1a3 3 0 0 1-3 3H3a3 3 0 0 1-3-3z" fill="#667089"/></svg>
<div style="position:absolute;top:1466.5px;line-height:39px;font-size:30px;color:#545a6d;font-weight:400;white-space:pre;left:130.0px;letter-spacing:-0.07px;">Perfil</div>
<svg class="abs" style="left:64.0px;top:1573.5px" width="28" height="32" viewBox="0 0 28 32"><path d="M2.500 0h23v29.500H28V32H0v-2.500h2.500z" fill="#667089"/><g fill="#fcfcfe"><rect x="7.500" y="4.500" width="4" height="4"/><rect x="16.500" y="4.500" width="4" height="4"/><rect x="7.500" y="11.500" width="4" height="4"/><rect x="16.500" y="11.500" width="4" height="4"/><rect x="7.500" y="18.500" width="4" height="4"/><rect x="16.500" y="18.500" width="4" height="4"/><rect x="11.500" y="25" width="5" height="7"/></g></svg>
<div style="position:absolute;top:1568.0px;line-height:39px;font-size:30px;color:#545a6d;font-weight:400;white-space:pre;left:130.0px;letter-spacing:-0.07px;">Perfil de la Compañía</div>
<svg class="abs" style="left:68.0px;top:1675.5px" width="20" height="32" viewBox="0 0 20 32"><rect width="20" height="32" rx="3" fill="#667089"/><rect x="3" y="4" width="14" height="20" fill="#fcfcfe"/><circle cx="10" cy="28" r="1.800" fill="#fcfcfe"/></svg>
<div style="position:absolute;top:1670.0px;line-height:39px;font-size:30px;color:#545a6d;font-weight:400;white-space:pre;left:130.0px;letter-spacing:-0.15px;">Descargar app</div>
<svg class="abs" style="left:64.0px;top:1778.5px" width="28" height="28" viewBox="0 0 28 28"><path d="M14 2v25M3 13L14 2l11 11" fill="none" stroke="#667089" stroke-width="4.200" stroke-linecap="round" stroke-linejoin="round"/></svg>
<div style="position:absolute;top:1771.0px;line-height:39px;font-size:30px;color:#545a6d;font-weight:400;white-space:pre;left:130.0px;letter-spacing:0.36px;">Actualizar</div>
<svg class="abs" style="left:64.0px;top:1880.5px" width="28" height="28" viewBox="0 0 28 28"><path d="M14 2v25M3 13L14 2l11 11" fill="none" stroke="#667089" stroke-width="4.200" stroke-linecap="round" stroke-linejoin="round"/></svg>
<div style="position:absolute;top:1873.0px;line-height:39px;font-size:30px;color:#545a6d;font-weight:400;white-space:pre;left:130.0px;letter-spacing:0.25px;">Teclas rapidas</div>
<svg class="abs" style="left:65.0px;top:1980.5px" width="26" height="31" viewBox="0 0 26 31"><path d="M9 0h8l1.500 2.500H26V6H0V2.500h7.500zM2 8.500h22V28a3 3 0 0 1-3 3H5a3 3 0 0 1-3-3z" fill="#667089"/><g fill="#fcfcfe"><rect x="6.500" y="12" width="2.600" height="15"/><rect x="11.700" y="12" width="2.600" height="15"/><rect x="16.900" y="12" width="2.600" height="15"/></g></svg>
<div style="position:absolute;top:1974.5px;line-height:39px;font-size:30px;color:#545a6d;font-weight:400;white-space:pre;left:130.0px;letter-spacing:0.09px;">Eliminar cuenta</div>
<svg class="abs" style="left:62.0px;top:2084.0px" width="32" height="28" viewBox="0 0 32 28"><g fill="#667089"><rect y="3" width="32" height="3.400"/><rect y="12.300" width="32" height="3.400"/><rect y="21.600" width="32" height="3.400"/><rect x="19" y="0" width="3.600" height="9.500"/><rect x="23" y="9.300" width="3.600" height="9.500"/><rect x="6" y="18.600" width="3.600" height="9.500"/></g></svg>
<div style="position:absolute;top:2076.5px;line-height:39px;font-size:30px;color:#545a6d;font-weight:400;white-space:pre;left:130.0px;letter-spacing:0.25px;">Constructor de</div>
<div style="position:absolute;top:2124.5px;line-height:39px;font-size:30px;color:#545a6d;font-weight:400;white-space:pre;left:52.0px;letter-spacing:0.06px;">navegacion</div>
<div style="position:absolute;top:2027.5px;line-height:29px;font-size:22px;color:#545a6d;font-weight:700;white-space:pre;left:297.0px;letter-spacing:-0.40px;">Precaucion</div>
<div class="abs" style="left:386px;top:655.5px;width:40px;height:34px;border-radius:17px;background:#52b596"></div>
<div style="position:absolute;top:658.0px;line-height:29px;font-size:22px;color:#fff;font-weight:700;white-space:pre;left:0.0px;width:40px;text-align:center;left:386px;">2</div>
<div class="abs" style="left:386px;top:756.5px;width:40px;height:34px;border-radius:17px;background:#52b596"></div>
<div style="position:absolute;top:759.0px;line-height:29px;font-size:22px;color:#fff;font-weight:700;white-space:pre;left:0.0px;width:40px;text-align:center;left:386px;">2</div>
<div class="abs" style="left:386px;top:1110.0px;width:40px;height:34px;border-radius:17px;background:#52b596"></div>
<div style="position:absolute;top:1112.5px;line-height:29px;font-size:22px;color:#fff;font-weight:700;white-space:pre;left:0.0px;width:40px;text-align:center;left:386px;">4</div>
<div class="abs" style="left:2616px;top:61px;width:842px;height:2009px;border-radius:46px;background:linear-gradient(125deg,#27376a 0%,#2a3f6d 18%,#2c4771 37.5%,#2f557b 50%,#35637f 62.5%,#3a7290 82%,#3f7e9a 100%);box-shadow:-40px 20px 140px rgba(20,25,45,.30),0 30px 60px rgba(20,25,45,.25);border:2px solid rgba(30,50,90,.6)"></div>
<div style="position:absolute;top:93.5px;line-height:27px;font-size:21px;color:#6ed3ee;font-weight:400;white-space:pre;left:2655.0px;letter-spacing:2.36px;">IA DE DIGITXBOOKS</div>
<div style="position:absolute;top:132.5px;line-height:47px;font-size:36px;color:#ffffff;font-weight:700;white-space:pre;left:2655.0px;letter-spacing:-0.76px;">Panel</div>
<div class="abs" style="left:3165px;top:107px;width:184px;height:46px;border-radius:23px;border:2px solid rgba(255,255,255,.14);background:rgba(20,35,70,.25)"></div>
<div style="position:absolute;top:117.0px;line-height:26px;font-size:20px;color:#e4e9f2;font-weight:400;white-space:pre;left:3187.0px;letter-spacing:1.53px;">CLEAR CHAT</div>
<div class="abs" style="left:3362px;top:92px;width:56px;height:76px;border-radius:28px/38px;background:rgba(20,35,75,.45)"></div>
<svg class="abs" style="left:3381px;top:121px" width="18" height="18" viewBox="0 0 18 18"><path d="M1.500 1.500l15 15M16.500 1.500l-15 15" stroke="#f4f6fa" stroke-width="2.300" stroke-linecap="round"/></svg>
<div class="abs" style="left:2654px;top:199px;width:128px;height:55px;border-radius:28px;background:rgba(255,255,255,.13);border:2px solid rgba(255,255,255,.10)"></div>
<div style="position:absolute;top:211.5px;line-height:31px;font-size:24px;color:#eef1f7;font-weight:400;white-space:pre;left:2675.0px;letter-spacing:0.10px;">General</div>
<div class="abs" style="left:2654px;top:255px;width:374px;height:76px;border-radius:38px;background:#38756f;box-shadow:0 10px 24px rgba(10,20,40,.30)"></div>
<div style="position:absolute;top:279.0px;line-height:30px;font-size:23px;color:#f1f6f6;font-weight:400;white-space:pre;left:2708.0px;letter-spacing:2.91px;-webkit-text-stroke:0.350px #f1f6f6;">BUSQUEDA GLOBAL</div>
<div class="abs" style="left:3044px;top:255px;width:374px;height:76px;border-radius:38px;background:#38756f;box-shadow:0 10px 24px rgba(10,20,40,.30)"></div>
<div style="position:absolute;top:279.0px;line-height:30px;font-size:23px;color:#f1f6f6;font-weight:400;white-space:pre;left:3116.0px;letter-spacing:2.57px;-webkit-text-stroke:0.350px #f1f6f6;">RESUMIR PAGINA</div>
<div class="abs" style="left:2654px;top:348px;width:764px;height:74px;border-radius:37px;background:rgba(35,50,95,.30);border:2px solid rgba(255,255,255,.05)"></div>
<div style="position:absolute;top:371.0px;line-height:30px;font-size:23px;color:#8696b4;font-weight:400;white-space:pre;left:2877.0px;letter-spacing:2.78px;">ANALISIS DEL INFORME</div>
<div class="abs" style="left:2655px;top:473px;width:762px;height:156px;border-radius:30px;background:linear-gradient(160deg,#20305a,#243c5e);border:2px solid #16223f"></div>
<div style="position:absolute;top:494.0px;line-height:40px;font-size:31px;color:#e9edf5;font-weight:700;white-space:pre;left:2681.0px;letter-spacing:0.27px;">Pregunta a la IA sobre esta pagina, regis...</div>
<div class="abs" style="left:2654px;top:655px;width:764px;height:76px;border-radius:38px;background:#38756f;box-shadow:0 10px 24px rgba(10,20,40,.30)"></div>
<div style="position:absolute;top:678.0px;line-height:30px;font-size:23px;color:#f1f6f6;font-weight:400;white-space:pre;left:2901.0px;letter-spacing:2.92px;-webkit-text-stroke:0.350px #f1f6f6;">PREGUNTAR A LA IA</div>
<div class="abs" style="left:2654px;top:755px;width:764px;height:71px;border-radius:36px;background:rgba(28,42,80,.42);border:2px solid rgba(255,255,255,.07)"></div>
<div style="position:absolute;top:776.5px;line-height:30px;font-size:23px;color:#e3e8f2;font-weight:400;white-space:pre;left:2681.0px;letter-spacing:1.96px;-webkit-text-stroke:0.700px #e3e8f2;">AI TOOLS</div>
<svg class="abs" style="left:3368px;top:786px" width="16" height="10" viewBox="0 0 16 10"><path d="M1.500 1.500L8 8l6.500-6.500" fill="none" stroke="#0f1b33" stroke-width="2.600"/></svg>
<div class="abs" style="left:2655px;top:876px;width:739px;height:1156px;border-radius:44px 44px 0 0;background:linear-gradient(165deg,#1d2b4c 0%,#21344f 50%,#27465e 100%);border:2px solid rgba(15,25,50,.5);border-bottom:0"></div>
<div class="abs" style="left:3411px;top:876px;width:15px;height:417px;border-radius:8px;background:rgba(255,255,255,.16)"></div>
<div style="position:absolute;top:910.0px;line-height:27px;font-size:21px;color:#6ed3ee;font-weight:400;white-space:pre;left:2688.0px;letter-spacing:2.29px;">AI ANSWER</div>
<div class="abs" style="left:3254px;top:909px;width:105px;height:40px;border-radius:20px;border:2px solid rgba(255,255,255,.14);background:rgba(15,25,50,.2)"></div>
<div style="position:absolute;top:916.0px;line-height:26px;font-size:20px;color:#e4e9f2;font-weight:400;white-space:pre;left:3276.0px;letter-spacing:1.11px;">COPY</div>
<div class="abs" style="left:2655px;top:876px;width:738px;height:1155px;overflow:hidden">
<div style="position:absolute;top:125.5px;line-height:50px;font-size:28px;color:#f3f6fa;font-weight:400;white-space:pre;left:128.0px;letter-spacing:0.75px;">In DigitXBooks, a **Risk Entry** typically</div>
<div style="position:absolute;top:175.9px;line-height:50px;font-size:28px;color:#f3f6fa;font-weight:400;white-space:pre;left:33.0px;letter-spacing:0.91px;">refers to recording or tracking financial or</div>
<div style="position:absolute;top:226.3px;line-height:50px;font-size:28px;color:#f3f6fa;font-weight:400;white-space:pre;left:33.0px;letter-spacing:0.78px;">operational risks related to your business</div>
<div style="position:absolute;top:276.7px;line-height:50px;font-size:28px;color:#f3f6fa;font-weight:400;white-space:pre;left:33.0px;letter-spacing:0.79px;">transactions or accounts. However, based on the</div>
<div style="position:absolute;top:327.1px;line-height:50px;font-size:28px;color:#f3f6fa;font-weight:400;white-space:pre;left:33.0px;letter-spacing:0.84px;">current dashboard and data context, there is no</div>
<div style="position:absolute;top:377.5px;line-height:50px;font-size:28px;color:#f3f6fa;font-weight:400;white-space:pre;left:33.0px;letter-spacing:0.87px;">explicit module or direct mention of a &quot;Risk Entry&quot;</div>
<div style="position:absolute;top:427.9px;line-height:50px;font-size:28px;color:#f3f6fa;font-weight:400;white-space:pre;left:33.0px;letter-spacing:0.76px;">feature as a standalone entry type.</div>
<div style="position:absolute;top:528.7px;line-height:50px;font-size:28px;color:#f3f6fa;font-weight:400;white-space:pre;left:33.0px;letter-spacing:0.83px;">Here’s what you can consider about risk-related</div>
<div style="position:absolute;top:579.1px;line-height:50px;font-size:28px;color:#f3f6fa;font-weight:400;white-space:pre;left:33.0px;letter-spacing:0.85px;">entries or tracking in the system:</div>
<div style="position:absolute;top:679.9px;line-height:50px;font-size:28px;color:#f3f6fa;font-weight:400;white-space:pre;left:33.0px;letter-spacing:0.96px;">- **Ledger Entries**: These can reflect</div>
<div style="position:absolute;top:730.3px;line-height:50px;font-size:28px;color:#f3f6fa;font-weight:400;white-space:pre;left:33.0px;letter-spacing:0.89px;">adjustments or special financial entries that might</div>
<div style="position:absolute;top:780.7px;line-height:50px;font-size:28px;color:#f3f6fa;font-weight:400;white-space:pre;left:33.0px;letter-spacing:0.92px;">be related to risk provisions or write-offs. For</div>
<div style="position:absolute;top:831.1px;line-height:50px;font-size:28px;color:#f3f6fa;font-weight:400;white-space:pre;left:33.0px;letter-spacing:0.76px;">example, ledger entries with negative amounts</div>
<div style="position:absolute;top:881.5px;line-height:50px;font-size:28px;color:#f3f6fa;font-weight:400;white-space:pre;left:33.0px;letter-spacing:0.93px;">might indicate risk-related adjustments.</div>
<div style="position:absolute;top:931.9px;line-height:50px;font-size:28px;color:#f3f6fa;font-weight:400;white-space:pre;left:33.0px;letter-spacing:0.88px;">- **Expense Entries**: Sometimes risk-related</div>
<div style="position:absolute;top:982.3px;line-height:50px;font-size:28px;color:#f3f6fa;font-weight:400;white-space:pre;left:33.0px;letter-spacing:0.70px;">costs or provisions are recorded as expenses.</div>
<div style="position:absolute;top:1032.7px;line-height:50px;font-size:28px;color:#f3f6fa;font-weight:400;white-space:pre;left:33.0px;letter-spacing:0.92px;">- **Customer and Vendor Balances**: Monitoring</div>
<div style="position:absolute;top:1083.1px;line-height:50px;font-size:28px;color:#f3f6fa;font-weight:400;white-space:pre;left:33.0px;letter-spacing:0.74px;">overdue balances or advances can help identify</div>
<div style="position:absolute;top:1133.5px;line-height:50px;font-size:28px;color:#f3f6fa;font-weight:400;white-space:pre;left:33.0px;letter-spacing:1.13px;">credit risk.</div>
</div>
<div class="abs" style="left:3344px;top:2098px;width:112px;height:112px;border-radius:50%;background:#050505;border:2.500px solid #2a3350;box-shadow:0 8px 24px rgba(0,0,0,.28)"></div>
<svg class="abs" style="left:3344px;top:2098px" width="112" height="112" viewBox="0 0 112 112"><path d="M21.0 97.7L36.8 97.7L46.4 84.7L35.6 75.7zM53.1 97.7L72.3 97.7L56.0 75.1L45.2 87.0z" fill="#fff"/><path d="M39.6 51.4L49.2 51.4L49.2 66.7L41.8 66.7zM52.0 38.4L60.5 38.4L60.5 58.7L52.0 63.3zM63.9 23.7L72.3 23.7L72.3 47.4L63.9 52.0z" fill="#fff"/><path d="M20.4 50.3L39.0 50.8L45.2 66.1L93.2 17.0L45.2 85.9z" fill="#336fba"/></svg>
</body></html>
